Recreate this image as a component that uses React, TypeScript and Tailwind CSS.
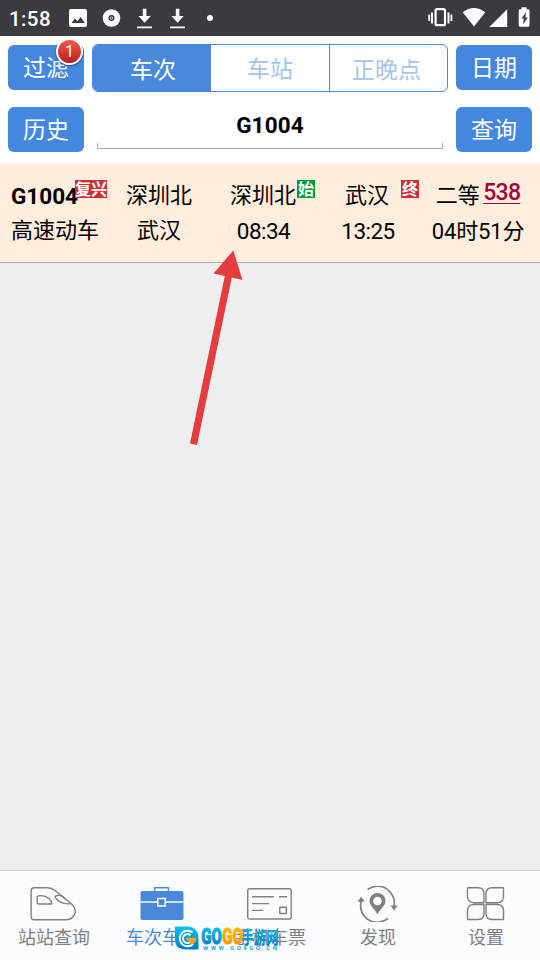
import React from "react";

const Btn = ({ children }: { children: React.ReactNode }) => (
  <button className="relative h-[45px] w-[76px] shrink-0 rounded-[6px] bg-[#4487df] text-[23px] leading-[47px] text-white">
    {children}
  </button>
);

const Download = () => (
  <svg width="17" height="22" viewBox="0 0 17 22" fill="#fff">
    <path d="M6.8 0.8h3.6v7.2h4.4l-6.2 6.8-6.2-6.800h4.400zM1 18.500h15v1.700H1z" />
  </svg>
);

function StatusBar() {
  return (
    <header className="flex h-9 items-center bg-[#3a3b40] text-white">
      <span className="ml-[9px] w-[60px] pt-0.5 text-[20.5px] font-medium leading-9 tracking-[0.4px]">1:58</span>
      <svg width="18" height="18" viewBox="0 0 18 18">
        <rect width="18" height="18" rx="2" fill="#fff" />
        <path d="M2.5 14l3.5-4.5 2.4 2.8L11.7 8l4.2 6z" fill="#3a3b40" />
      </svg>
      <svg className="ml-[15px]" width="19" height="18" viewBox="0 0 19 18">
        <circle cx="9.5" cy="9" r="8.8" fill="#fff" />
        <circle cx="9.5" cy="9" r="2.3" fill="#fff" stroke="#3a3b40" strokeWidth="1.5" />
        <circle cx="9.5" cy="9" r="0.9" fill="#3a3b40" />
      </svg>
      <span className="ml-[15px] flex gap-4 pt-px"><Download /><Download /></span>
      <span className="ml-[21px] size-[6px] rounded-full bg-white" />
      <svg className="ml-auto mr-[8px]" width="104" height="24" viewBox="0 0 104 24" fill="#fff">
        <path d="M0.300 8.500h1.800v6.500H0.300zM3 6.500h2v11H3zM19.500 6.500h2v11h-2zM22.500 8.500h1.800v6.500h-1.800z" />
        <rect x="7.600" y="3.200" width="9.400" height="16" rx="1.500" fill="none" stroke="#fff" strokeWidth="2.200" />
        <path d="M34.700 6.300Q46-2.500 57.300 6.300L46 20.600zM79.200 3.200v17.800H61.300z" />
        <path d="M93.500 1.300h5v2h1.600q1.400 0 1.400 1.400v14.600q0 1.400-1.400 1.400h-8q-1.400 0-1.400-1.400V4.700q0-1.400 1.400-1.400h1.400z" />
        <path d="M98 6.300l-4.600 6.200h2.400L95 18.300l4.900-6.900h-2.500z" fill="#3a3b40" />
      </svg>
    </header>
  );
}

function TrainRow() {
  const tag = "absolute top-[17px] h-[18px] text-center text-[16px] font-bold leading-[19px] text-white";
  return (
    <section className="relative flex h-[100px] border-b border-[#aaa] bg-[#ffeddd] pt-[16px] text-center text-[22px] leading-[34.5px] text-black">
      <div className="w-[98px] whitespace-nowrap pl-[11px] text-left">
        <div className="text-[22.5px] font-bold">G1004</div>
        <div>高速动车</div>
      </div>
      <div className="ml-[9px] w-[104px]">
        <div>深圳北</div>
        <div>武汉</div>
      </div>
      <div className="w-[104px]">
        <div>深圳北</div>
        <div className="pl-[1px] text-[22.5px] tracking-[-0.5px]">08:34</div>
      </div>
      <div className="ml-[1px] w-[104px]">
        <div className="pr-[2px]">武汉</div>
        <div className="text-[22.5px] tracking-[-0.5px]">13:25</div>
      </div>
      <div className="ml-[4px] w-[108px]">
        <div className="whitespace-nowrap">二等 <span className="relative -top-[3px] -ml-[2px] text-[23px] font-medium tracking-[-0.7px] text-[#a0003c] underline decoration-1 underline-offset-[3px]">538</span></div>
        <div className="pt-px tracking-[-0.15px]">04时51分</div>
      </div>
      <span className={`${tag} left-[75px] w-8 bg-[#cc3234]`}>复兴</span>
      <span className={`${tag} left-[297px] w-[18px] bg-[#009a38]`}>始</span>
      <span className={`${tag} left-[401px] w-[18px] bg-[#cc3234]`}>终</span>
    </section>
  );
}

const line = { fill: "none", stroke: "#808080", strokeWidth: 1.4, strokeLinejoin: "round" as const };

const TrainIcon = () => (
  <svg width="48" height="36" viewBox="0.4 0 48 36" {...line}>
    <path d="M4.5 1.7H18q4 0 7.5 2.8L42 18q4.500 4.500 3.500 9-2 6.600-9 6.700h-32q-3 0-3-3v-26q0-3 3-3z" />
    <path d="M9.500 9.700q6-.5 10 2.800 2.600 2.400 2.600 5.500H9.500q-2 0-2-2v-4.300q0-2 2-2zM32 9.700q-6.500-1.200-6.500 1.500 4.500 7.500 15.500 6.600M32 9.700q2 1.300 3.500 3.300" />
  </svg>
);
const CaseIcon = () => (
  <svg width="48" height="36" viewBox="0 0 48 36">
    <path d="M16.6 6V1.700h13.800V6" fill="none" stroke="#4a89d9" strokeWidth="1.400" />
    <rect x="2.500" y="5" width="43" height="29" rx="2" fill="#4a89d9" />
    <path d="M2.500 16h43" stroke="#fff" strokeWidth="1.500" />
    <rect x="19.800" y="12.500" width="7.500" height="7.500" fill="#4a89d9" stroke="#fff" strokeWidth="1.500" />
  </svg>
);
const TicketIcon = () => (
  <svg width="48" height="36" viewBox="0 0 48 36" {...line}>
    <rect x="1.700" y="2.700" width="43.500" height="30.300" rx="2" />
    <path d="M6 10.800h22M33 10.800h8M6 17.600h17M6 24.400h11M33.800 21.200h6.500v6.300h-6.500z" />
  </svg>
);
const DiscoverIcon = () => (
  <svg width="44" height="36" viewBox="0 0 44 36" fill="none" stroke="#808080" strokeWidth="1.700">
    <path d="M11.500 3.700A16.600 16.600 0 0138 20M32 32.300A16.600 16.600 0 015.300 15" />
    <path d="M1.500 15.700L5.200 10.700l3.500 5zM34.500 19.500h7.200l-3.600 5z" fill="#808080" stroke="none" />
    <path fillRule="evenodd" d="M21.500 7a8 8 0 00-8 8c0 4.500 4.500 7 8 13.300 3.500-6.300 8-8.800 8-13.300a8 8 0 00-8-8zm0 3.700a4.300 4.300 0 110 8.600 4.300 4.300 0 010-8.600z" fill="#808080" stroke="none" />
  </svg>
);
const SettingsIcon = () => (
  <svg width="40" height="36" viewBox="0.5 0 40 36" {...line}>
    <path d="M2.500 1.700h10q6 0 6 6v9h-10q-6.500 0-6.500-6.500V2.200q0-.5.5-.5zM37.500 1.700H26.500q-6 0-6 6v9h11q6.500 0 6.500-6.500V2.200q0-.5-.5-.5zM2.500 33.500h10q6 0 6-6v-9h-10q-6.500 0-6.500 6.500v8q0 .5.5.5zM37.500 33.500H26.500q-6 0-6-6v-9h11q6.500 0 6.500 6.500v8q0 .5-.5.5z" />
  </svg>
);

const tabs = [
  { label: "站站查询", icon: <TrainIcon /> },
  { label: "车次车站", icon: <CaseIcon />, active: true },
  { label: "手机车票", icon: <TicketIcon /> },
  { label: "发现", icon: <DiscoverIcon /> },
  { label: "设置", icon: <SettingsIcon /> },
];

function Watermark() {
  return (
    <svg className="absolute left-[174px] top-[55px] overflow-visible" width="106" height="27" viewBox="0 0 106 27">
      <defs>
        <linearGradient id="blue" x1="0" y1="0" x2="0" y2="1"><stop stopColor="#08c4e8" /><stop offset="1" stopColor="#0877c8" /></linearGradient>
        <linearGradient id="orange" x1="0" y1="0" x2="0" y2="1"><stop stopColor="#ffc400" /><stop offset="1" stopColor="#ff8c00" /></linearGradient>
      </defs>
      <path d="M1 0.500h12Q24.500 1 24.500 13v10.500H12Q1 23.500 1 13z" fill="url(#blue)" />
      <path d="M18.500 6.500a7.800 7.800 0 10.500 11.500M16.500 9.300a4.500 4.500 0 10.500 6" fill="none" stroke="#fff" strokeWidth="1.900" />
      <path d="M12 11.800h10.500q0 5-5.500 7-1-4-5-5z" fill="#ffa51b" />
      <g fontFamily="Roboto, sans-serif" fontWeight="900" fontSize="22" strokeWidth="0.900">
        <text x="27.300" y="18.200" textLength="20.500" lengthAdjust="spacingAndGlyphs" fill="url(#blue)" stroke="url(#blue)">GO</text>
        <text x="48.200" y="18.200" textLength="20.500" lengthAdjust="spacingAndGlyphs" fill="url(#orange)" stroke="url(#orange)">GO</text>
      </g>
      <text x="67.500" y="17.500" textLength="37" lengthAdjust="spacingAndGlyphs" fontFamily="Noto Sans CJK SC, sans-serif" fontWeight="900" fontSize="17" fill="url(#blue)">手游网</text>
      <text x="29" y="24.300" textLength="74" fontFamily="Roboto, sans-serif" fontWeight="700" fontSize="6" fill="#12a9df">WWW.GO9GO.CN</text>
    </svg>
  );
}

export default function App() {
  return (
    <div className="relative flex h-[960px] w-[540px] flex-col overflow-hidden bg-[#eee] font-[Roboto,'Noto_Sans_CJK_SC',sans-serif]">
      <StatusBar />
      <div className="h-[127px] bg-white px-2 pt-2">
        <div className="flex gap-2">
          <div className="pt-px"><Btn>过滤
            <span className="absolute right-px -top-[7px] size-[27px] rounded-full border-2 border-white bg-linear-to-b from-[#f0594a] to-[#b81d1b] text-center text-[16px] leading-[24px] shadow-[0_1px_2px_rgba(0,0,0,.5)]">1</span>
          </Btn></div>
          <div className="grid h-12 w-[356px] grid-cols-[118px_119px_117px] overflow-hidden rounded-[6px] border border-[#4a89d9] text-center text-[23px] leading-[52px] text-[#a5c4ec]">
            <div className="bg-[#4a89d9] pl-[2px] text-white">车次</div>
            <div className="border-r border-[#4a89d9] leading-[50px]">车站</div>
            <div className="pr-[4px]">正晚点</div>
          </div>
          <div className="pt-px"><Btn>日期</Btn></div>
        </div>
        <div className="mt-[15px] flex">
          <Btn>历史</Btn>
          <div className="mx-[13px] w-[346px] text-center text-[22.5px] font-bold tracking-[0.15px] text-black">
            <div className="h-9 leading-[37px]">G1004</div>
            <div className="h-[6px] border-x border-b border-[#aaa]" />
          </div>
          <Btn>查询</Btn>
        </div>
      </div>
      <TrainRow />
      <nav className="relative mt-auto grid h-[90px] grid-cols-5 border-t border-[#d0d0d0] bg-[#fbfcff] pt-[15px]">
        {tabs.map((t) => (
          <div key={t.label} className={`flex flex-col items-center text-[18px] leading-[32px] ${t.active ? "text-[#4a89d9]" : "text-[#808080]"}`}>
            {t.icon}
            <span>{t.label}</span>
          </div>
        ))}
        <Watermark />
      </nav>
      <svg className="absolute left-[180px] top-[245px]" width="70" height="205" viewBox="180 245 70 205">
        <path d="M233.300 250.500L242.500 280 231.800 277.500 197 445 190 443.500 224.800 276 213.500 273.500z" fill="#e53d3d" />
      </svg>
    </div>
  );
}
